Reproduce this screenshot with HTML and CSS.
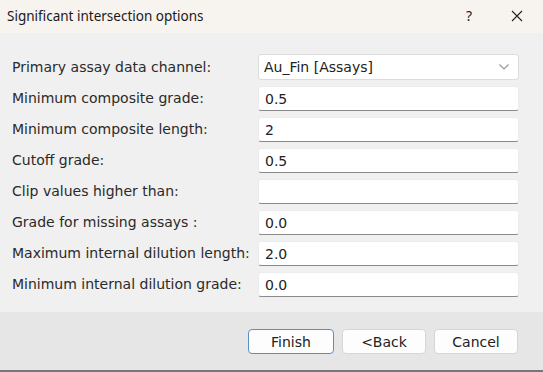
FILE: index.html
```html
<!DOCTYPE html>
<html lang="en">
<head>
  <meta charset="UTF-8" />
  <title>Significant intersection options</title>
  <link rel="stylesheet" href="styles.css">
</head>
<body>
  <div class="dialog">
    <div class="titlebar">
      <span class="title">Significant intersection options</span>
      <span class="help">?</span>
      <svg class="close" width="12" height="12" viewBox="0 0 12 12">
        <path d="M1 1 L11 11 M11 1 L1 11" stroke="#222" stroke-width="1.1" fill="none" />
      </svg>
    </div>

    <div class="form">
      <label>Primary assay data channel:</label>
      <div class="select">
        <span>Au_Fin [Assays]</span>
        <svg width="10" height="6" viewBox="0 0 10 6">
          <path d="M0.5 0.5 L5 5 L9.5 0.5" stroke="#999" stroke-width="1.2" fill="none" />
        </svg>
      </div>

      <label>Minimum composite grade:</label>
      <input type="text" value="0.5">

      <label>Minimum composite length:</label>
      <input type="text" value="2">

      <label>Cutoff grade:</label>
      <input type="text" value="0.5">

      <label>Clip values higher than:</label>
      <input type="text" value="">

      <label>Grade for missing assays :</label>
      <input type="text" value="0.0">

      <label>Maximum internal dilution length:</label>
      <input type="text" value="2.0">

      <label>Minimum internal dilution grade:</label>
      <input type="text" value="0.0">
    </div>

    <div class="footer">
      <button class="primary">Finish</button>
      <button>&lt;Back</button>
      <button>Cancel</button>
    </div>
  </div>
</body>
</html>
```

FILE: styles.css
```css
body {
  margin: 0;
  font-family: "DejaVu Sans", Verdana, sans-serif;
  background: #f0f0f0;
  color: #222;
}

.dialog {
  width: 543px;
  height: 372px;
  display: flex;
  flex-direction: column;
  overflow: hidden;
}

.titlebar {
  height: 33px;
  background: #f7f3ef;
  display: flex;
  align-items: center;
  padding-left: 7px;
  flex-shrink: 0;
}

.title {
  font-family: "Noto Sans", "Open Sans", sans-serif;
  font-size: 13.5px;
  color: #1a1a1a;
  flex: 1;
  margin-top: -2px;
}

.help {
  font-family: "Noto Sans", sans-serif;
  font-size: 14px;
  color: #222;
  margin-right: 39px;
  margin-top: -2px;
}

.close {
  margin-right: 20px;
  margin-top: -2px;
}

.form {
  display: grid;
  grid-template-columns: 246px 261px;
  grid-auto-rows: 25px;
  row-gap: 6px;
  padding: 21px 0 16px 12px;
  background: #f0f0f0;
}

label {
  font-size: 14px;
  display: flex;
  align-items: center;
  color: #2a2a2a;
  white-space: nowrap;
}

.select {
  height: 26px;
  box-sizing: border-box;
  border: 1px solid #dcdcdc;
  border-radius: 3px;
  background: #fff;
  display: flex;
  align-items: center;
  justify-content: space-between;
  padding: 0 9px 0 5px;
  font-size: 14px;
  color: #222;
}

input {
  height: 25px;
  box-sizing: border-box;
  border: 1px solid #ececec;
  border-bottom: 1px solid #8a8a8a;
  border-radius: 3px;
  background: #fff;
  padding: 0 6px;
  font-family: inherit;
  font-size: 14px;
  color: #222;
  margin-top: 1px;
}

.footer {
  flex: 1;
  background: #e6e6e6;
  display: flex;
  justify-content: flex-end;
  align-items: flex-start;
  gap: 8px;
  padding: 17px 25px 0 0;
  border-bottom: 2px solid #777;
}

button {
  width: 84px;
  height: 25px;
  border: 1px solid #d6d6d6;
  border-radius: 4px;
  background: #fdfdfd;
  font-family: inherit;
  font-size: 14px;
  color: #222;
  padding: 0;
}

button.primary {
  width: 86px;
  border: 1.5px solid #5b8fc2;
}
```
